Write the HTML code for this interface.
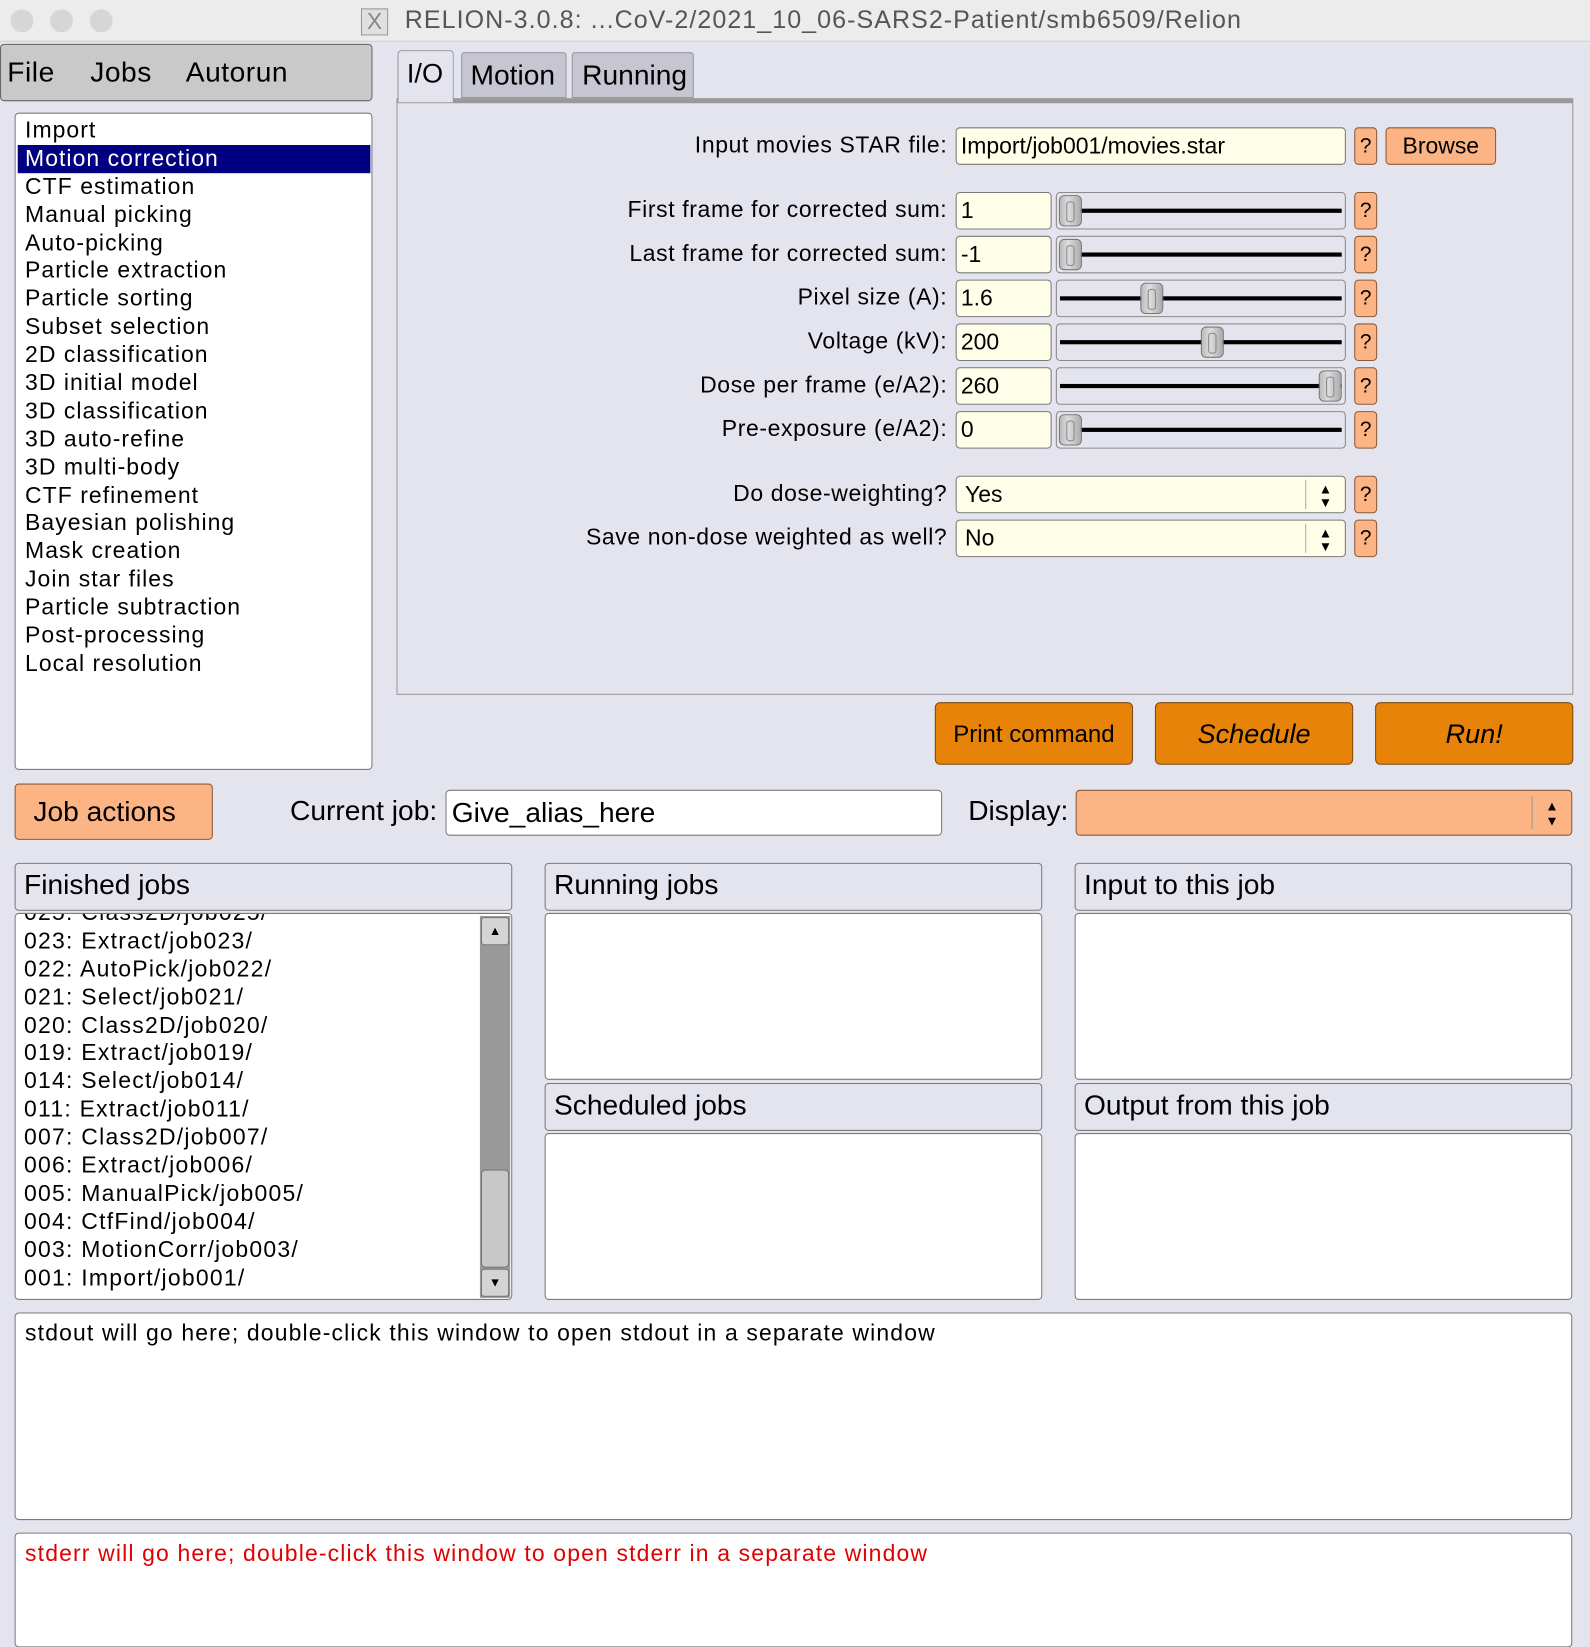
<!DOCTYPE html><html><head><meta charset="utf-8"><style>
*{box-sizing:border-box;margin:0;padding:0}
html,body{width:1590px;height:1636px;overflow:hidden;background:#e4e4ee}
#w{position:absolute;left:0;top:0;width:1524px;height:1568px;transform:scale(1.04331);transform-origin:0 0;background:#e4e4ee;font-family:"Liberation Sans Narrow","Liberation Sans",sans-serif;color:#000}
.a{position:absolute}
.box{position:absolute;border:1px solid #7a7a7a;border-radius:4px}
.w{background:#fff}
.q{position:absolute;width:22px;height:36px;background:#fdb485;border:1px solid #8a5a3a;border-radius:4px;font-size:20px;text-align:center;line-height:34px}
.lbl{position:absolute;right:616px;font-size:22px;letter-spacing:.6px;white-space:nowrap}
.inp{position:absolute;left:916px;height:36px;background:#fffee8;border:1px solid #7a7a7a;border-radius:4px;font-size:22px;padding-left:4px;line-height:34px}
.sl{position:absolute;left:1012px;width:278px;height:36px;border:1px solid #8a8a8a;border-radius:4px;background:#e4e4ee}
.sl i{position:absolute;left:3px;right:3px;top:15px;height:4px;background:#000}
.sl b{position:absolute;top:2px;width:22px;height:30px;border:1px solid #777;border-radius:5px;background:linear-gradient(90deg,#bbb,#ddd 40%,#aaa)}
.sl b:after{content:"";position:absolute;left:6px;top:5px;width:6px;height:18px;border:1px solid #888;border-radius:3px}
.list div{height:26.9px;line-height:26.9px}
.hdr{position:absolute;height:46px;border:1px solid #7a7a7a;border-radius:4px;background:#e4e4ee;font-size:27px;padding-left:8px;line-height:40px}
.ob{position:absolute;top:673px;width:190px;height:60px;background:#e8830a;border:1px solid #7a4a10;border-radius:5px;font-size:24px;text-align:center;line-height:58px}
</style></head><body><div id="w">
<div class="a" style="left:0;top:0;width:1524px;height:40px;background:#ececec;border-bottom:1px solid #d0d0d0"></div>
<div class="a" style="left:10px;top:9px;width:22px;height:22px;border-radius:50%;background:#d6d6d6"></div>
<div class="a" style="left:48px;top:9px;width:22px;height:22px;border-radius:50%;background:#d6d6d6"></div>
<div class="a" style="left:86px;top:9px;width:22px;height:22px;border-radius:50%;background:#d6d6d6"></div>
<div class="a" style="left:346px;top:8px;width:26px;height:26px;border:1px solid #999;background:#e0e0e0;font-size:22px;line-height:24px;text-align:center;color:#888">X</div>
<div class="a" style="left:388px;top:6px;font-size:24px;color:#555;font-family:'Liberation Sans',sans-serif;letter-spacing:1px">RELION-3.0.8: ...CoV-2/2021_10_06-SARS2-Patient/smb6509/Relion</div>

<div class="a" style="left:0;top:42px;width:357px;height:55px;background:#c9c9c9;border:1px solid #666;border-radius:4px;font-size:27px;line-height:52px;padding-left:6px;word-spacing:26px;letter-spacing:.5px">File Jobs Autorun</div>
<div class="box w list" style="left:14px;top:108px;width:343px;height:630px;padding:3px 0 0 2px;font-size:22px;letter-spacing:1px">
<div style="padding-left:7px">Import</div><div style="background:#000080;color:#fff;padding-left:7px;margin-right:1px">Motion correction</div>
<div style="padding-left:7px">CTF estimation</div><div style="padding-left:7px">Manual picking</div><div style="padding-left:7px">Auto-picking</div><div style="padding-left:7px">Particle extraction</div><div style="padding-left:7px">Particle sorting</div><div style="padding-left:7px">Subset selection</div><div style="padding-left:7px">2D classification</div><div style="padding-left:7px">3D initial model</div><div style="padding-left:7px">3D classification</div><div style="padding-left:7px">3D auto-refine</div><div style="padding-left:7px">3D multi-body</div><div style="padding-left:7px">CTF refinement</div><div style="padding-left:7px">Bayesian polishing</div><div style="padding-left:7px">Mask creation</div><div style="padding-left:7px">Join star files</div><div style="padding-left:7px">Particle subtraction</div><div style="padding-left:7px">Post-processing</div><div style="padding-left:7px">Local resolution</div>
</div>

<div class="a" style="left:380px;top:94px;width:1128px;height:572px;border:1px solid #999;border-top:5px solid #999;background:#e4e4ee"></div>
<div class="a" style="left:381px;top:48px;width:54px;height:50px;background:#e4e4ee;border:1px solid #999;border-bottom:none;border-radius:4px 4px 0 0;font-size:26px;padding-left:8px;line-height:42px">I/O</div>
<div class="a" style="left:442px;top:50px;width:101px;height:44px;background:#c6c6d2;border:1px solid #999;border-radius:3px 3px 0 0;font-size:27px;padding-left:8px;line-height:42px">Motion</div>
<div class="a" style="left:548px;top:50px;width:117px;height:44px;background:#c6c6d2;border:1px solid #999;border-radius:3px 3px 0 0;font-size:27px;padding-left:9px;line-height:42px">Running</div>

<div class="lbl" style="top:126px">Input movies STAR file:</div>
<div class="inp" style="top:122px;width:374px">Import/job001/movies.star</div>
<div class="q" style="left:1298px;top:122px">?</div>
<div class="a" style="left:1328px;top:122px;width:106px;height:36px;background:#fdb485;border:1px solid #8a5a3a;border-radius:4px;font-size:22px;text-align:center;line-height:34px">Browse</div>

<div class="lbl" style="top:188px">First frame for corrected sum:</div>
<div class="inp" style="top:184px;width:92px">1</div><div class="sl" style="top:184px"><i></i><b style="left:2px"></b></div><div class="q" style="left:1298px;top:184px">?</div>
<div class="lbl" style="top:230px">Last frame for corrected sum:</div>
<div class="inp" style="top:226px;width:92px">-1</div><div class="sl" style="top:226px"><i></i><b style="left:2px"></b></div><div class="q" style="left:1298px;top:226px">?</div>
<div class="lbl" style="top:272px">Pixel size (A):</div>
<div class="inp" style="top:268px;width:92px">1.6</div><div class="sl" style="top:268px"><i></i><b style="left:80px"></b></div><div class="q" style="left:1298px;top:268px">?</div>
<div class="lbl" style="top:314px">Voltage (kV):</div>
<div class="inp" style="top:310px;width:92px">200</div><div class="sl" style="top:310px"><i></i><b style="left:138px"></b></div><div class="q" style="left:1298px;top:310px">?</div>
<div class="lbl" style="top:356px">Dose per frame (e/A2):</div>
<div class="inp" style="top:352px;width:92px">260</div><div class="sl" style="top:352px"><i></i><b style="left:251px"></b></div><div class="q" style="left:1298px;top:352px">?</div>
<div class="lbl" style="top:398px">Pre-exposure (e/A2):</div>
<div class="inp" style="top:394px;width:92px">0</div><div class="sl" style="top:394px"><i></i><b style="left:2px"></b></div><div class="q" style="left:1298px;top:394px">?</div>

<div class="lbl" style="top:460px">Do dose-weighting?</div>
<div class="inp" style="top:456px;width:374px;padding-left:8px">Yes<span class="a" style="left:334px;top:3px;height:28px;border-left:1px solid #aaa;width:38px;text-align:center;font-size:13px;line-height:13px;padding-top:2px">▲<br>▼</span></div>
<div class="q" style="left:1298px;top:456px">?</div>
<div class="lbl" style="top:502px">Save non-dose weighted as well?</div>
<div class="inp" style="top:498px;width:374px;padding-left:8px">No<span class="a" style="left:334px;top:3px;height:28px;border-left:1px solid #aaa;width:38px;text-align:center;font-size:13px;line-height:13px;padding-top:2px">▲<br>▼</span></div>
<div class="q" style="left:1298px;top:498px">?</div>

<div class="ob" style="left:896px;font-size:23px">Print command</div>
<div class="ob" style="left:1107px;font-style:italic;font-size:26px">Schedule</div>
<div class="ob" style="left:1318px;font-style:italic;font-size:26px">Run!</div>

<div class="a" style="left:14px;top:751px;width:190px;height:54px;background:#fdb485;border:1px solid #8a5a3a;border-radius:4px;font-size:27px;line-height:52px;padding-left:17px">Job actions</div>
<div class="a" style="left:278px;top:762px;font-size:27px">Current job:</div>
<div class="a" style="left:427px;top:757px;width:476px;height:44px;background:#fff;border:1px solid #7a7a7a;border-radius:4px;font-size:27px;line-height:42px;padding-left:5px">Give_alias_here</div>
<div class="a" style="left:928px;top:762px;font-size:27px">Display:</div>
<div class="a" style="left:1031px;top:757px;width:476px;height:44px;background:#fdb485;border:1px solid #8a5a3a;border-radius:4px"><span class="a" style="left:436px;top:5px;height:32px;border-left:1px solid #999;width:38px;text-align:center;font-size:13px;line-height:14px;padding-top:3px">▲<br>▼</span></div>

<div class="hdr" style="left:14px;top:827px;width:477px">Finished jobs</div>
<div class="box w" style="left:14px;top:875px;width:477px;height:371px;overflow:hidden">
<div class="list" style="position:absolute;left:8px;top:-14px;font-size:22px;letter-spacing:1.2px">
<div>025: Class2D/job025/</div><div>023: Extract/job023/</div><div>022: AutoPick/job022/</div><div>021: Select/job021/</div><div>020: Class2D/job020/</div><div>019: Extract/job019/</div><div>014: Select/job014/</div><div>011: Extract/job011/</div><div>007: Class2D/job007/</div><div>006: Extract/job006/</div><div>005: ManualPick/job005/</div><div>004: CtfFind/job004/</div><div>003: MotionCorr/job003/</div><div>001: Import/job001/</div></div>
<div class="a" style="left:445px;top:2px;width:29px;height:366px;background:#999"></div>
<div class="a" style="left:446px;top:3px;width:27px;height:27px;background:#d4d4d4;border:1px solid #777;border-radius:3px;font-size:12px;text-align:center;line-height:25px">▲</div>
<div class="a" style="left:446px;top:245px;width:27px;height:94px;background:#c8c8c8;border:1px solid #777;border-radius:4px"></div>
<div class="a" style="left:446px;top:340px;width:27px;height:27px;background:#d4d4d4;border:1px solid #777;border-radius:3px;font-size:12px;text-align:center;line-height:25px">▼</div>
</div>

<div class="hdr" style="left:522px;top:827px;width:477px">Running jobs</div>
<div class="box w" style="left:522px;top:875px;width:477px;height:160px"></div>
<div class="hdr" style="left:522px;top:1038px;width:477px">Scheduled jobs</div>
<div class="box w" style="left:522px;top:1086px;width:477px;height:160px"></div>
<div class="hdr" style="left:1030px;top:827px;width:477px">Input to this job</div>
<div class="box w" style="left:1030px;top:875px;width:477px;height:160px"></div>
<div class="hdr" style="left:1030px;top:1038px;width:477px">Output from this job</div>
<div class="box w" style="left:1030px;top:1086px;width:477px;height:160px"></div>

<div class="box w" style="left:14px;top:1258px;width:1493px;height:199px;font-size:22px;padding:6px 9px;letter-spacing:1.1px">stdout will go here; double-click this window to open stdout in a separate window</div>
<div class="box w" style="left:14px;top:1469px;width:1493px;height:110px;font-size:22px;padding:6px 9px;color:#e00000;letter-spacing:1.1px">stderr will go here; double-click this window to open stderr in a separate window</div>
</div></body></html>
